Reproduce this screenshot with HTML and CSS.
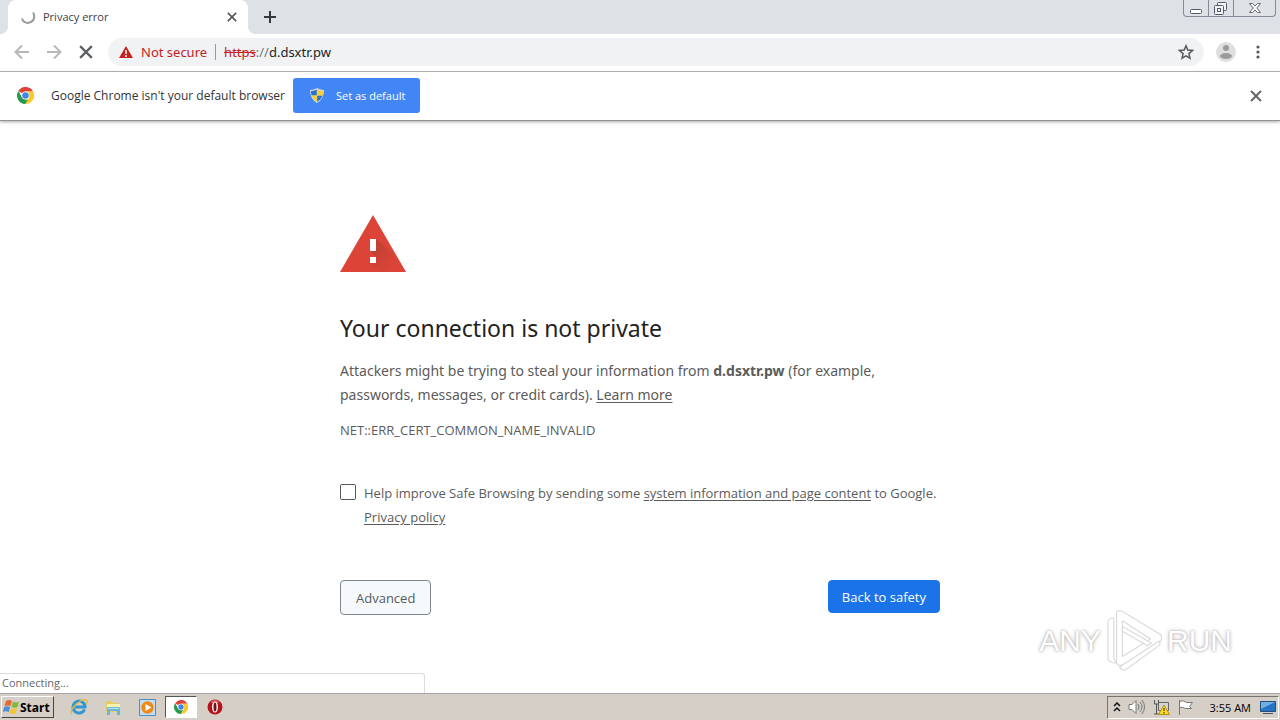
FILE: index.html
```html
<!DOCTYPE html>
<html lang="en">
<head>
<meta charset="utf-8">
<title>Privacy error</title>
<link rel="stylesheet" href="styles.css">
</head>
<body>
<svg class="defs" aria-hidden="true">
  <symbol id="chrome" viewBox="0 0 24 24">
    <path fill="#dd4237" d="M12 12 2 5.500A12 12 0 0 1 22.800 6.500H12z"/>
    <path fill="#fbc921" d="M12 6.500h10.800A12 12 0 0 1 11.500 24l5.500-9z"/>
    <path fill="#26994f" d="M2 5.500 7.200 14.800 12 17.500h3.600L11.500 24A12 12 0 0 1 2 5.500z"/>
    <circle cx="12" cy="12" r="5.600" fill="#fff"/>
    <circle cx="12" cy="12" r="4.600" fill="#4486e8"/>
  </symbol>
  <symbol id="cross" viewBox="0 0 12 12">
    <path d="m1 1 10 10M11 1 1 11" fill="none" stroke="currentColor" stroke-width="2"/>
  </symbol>
</svg>

<header class="browser">
  <div class="tabstrip">
    <div class="tab">
      <svg class="spinner" viewBox="0 0 16 16"><path d="M13 3.500Q15.500 7 13 11.500Q9 15.500 4.500 13Q2.500 12 2 9.500" fill="none" stroke="#999" stroke-width="2"/></svg>
      <span class="tab-title">Privacy error</span>
      <button class="icon-btn tab-close" aria-label="Close tab"><svg width="10" height="10"><use href="#cross"/></svg></button>
    </div>
    <button class="icon-btn new-tab" aria-label="New tab"><svg width="12" height="12" viewBox="0 0 12 12"><path d="M6 0v12M0 6h12" stroke="#35383d" stroke-width="2"/></svg></button>
    <div class="window-controls">
      <button class="win-btn" aria-label="Minimize"><svg width="14" height="14" viewBox="0 0 14 14"><rect x="1.500" y="8.500" width="11" height="4" rx="1" fill="#fff" stroke="#555b66"/></svg></button>
      <button class="win-btn" aria-label="Restore"><svg width="14" height="14" viewBox="0 0 14 14" fill="#f2f3f5" stroke="#555b66"><rect x="3.500" y="1.500" width="9" height="8" rx="1"/><rect x=".5" y="4.500" width="9" height="9" rx="1"/><rect x="3.500" y="7.500" width="3" height="3"/></svg></button>
      <button class="win-btn win-close" aria-label="Close"><svg width="12" height="12" viewBox="0 0 12 12"><path d="M.5 1.500h3L6 4l2.500-2.500h3L7.800 6l3.700 4.500h-3L6 8l-2.500 2.500h-3L4.200 6z" fill="#fff" stroke="#666b75"/></svg></button>
    </div>
  </div>

  <div class="toolbar">
    <button class="icon-btn nav" aria-label="Back"><svg width="16" height="16" viewBox="0 0 16 16"><path d="M15 8H2M8 1.500 1.500 8 8 14.500" fill="none" stroke="#b8b8b8" stroke-width="2"/></svg></button>
    <button class="icon-btn nav" aria-label="Forward"><svg width="16" height="16" viewBox="0 0 16 16"><path d="M1 8h13M8 1.500 14.500 8 8 14.500" fill="none" stroke="#b8b8b8" stroke-width="2"/></svg></button>
    <button class="icon-btn nav stop" aria-label="Stop"><svg width="14" height="14"><use href="#cross"/></svg></button>
    <div class="omnibox">
      <svg width="14" height="12" viewBox="0 0 14 12"><path d="m7 0 7 12H0z" fill="#c5221f"/><path d="M7 4v4M7 9v2" stroke="#fff" stroke-width="1.500"/></svg>
      <span class="not-secure">Not secure</span>
      <span class="url"><s>https</s><i>://</i>d.dsxtr.pw</span>
      <button class="icon-btn star" aria-label="Bookmark"><svg width="16" height="16" viewBox="0 0 16 16"><path d="m8 1.800 1.800 4.300 4.700.4-3.600 3.100 1.100 4.600L8 11.800l-4 2.400 1.100-4.600-3.600-3.100 4.700-.4z" fill="none" stroke="#555a60" stroke-width="1.500"/></svg></button>
    </div>
    <button class="icon-btn profile" aria-label="Profile"><svg width="20" height="20" viewBox="0 0 20 20"><circle cx="10" cy="10" r="10" fill="#dfdfdf"/><circle cx="10" cy="6" r="3" fill="#9b9b9b"/><ellipse cx="10" cy="14" rx="6" ry="3" fill="#9b9b9b"/></svg></button>
    <button class="icon-btn menu" aria-label="Menu"><svg width="4" height="14" viewBox="0 0 4 14" fill="#55585d"><circle cx="2" cy="2" r="1.600"/><circle cx="2" cy="7" r="1.600"/><circle cx="2" cy="12" r="1.600"/></svg></button>
  </div>

  <div class="infobar">
    <svg width="17" height="17"><use href="#chrome"/></svg>
    <span class="info-text">Google Chrome isn't your default browser</span>
    <button class="set-default">
      <svg width="14" height="15" viewBox="0 0 14 15"><path d="M7 0q3 2 7 2 0 9-7 13Q0 11 0 2q4 0 7-2z" fill="#d9dde2"/><path d="M6.800 1.500v6H1.500Q1 5 1 3q3 0 5.800-1.500zM7.200 7.500h5.500Q11 12 7.200 14z" fill="#2773c7"/><path d="M7.200 1.500Q10 3 13 3q0 2-.3 4.500H7.200zM6.800 7.500V14Q3 12 1.500 7.500z" fill="#f8cd32"/></svg>
      Set as default
    </button>
    <button class="icon-btn info-close" aria-label="Dismiss"><svg width="12" height="12"><use href="#cross"/></svg></button>
  </div>
</header>

<main class="page">
  <div class="interstitial">
    <svg class="warning" width="66" height="57" viewBox="0 0 66 57"><defs><linearGradient id="shade" x1="0" y1="0" x2="1" y2="1"><stop offset="0" stop-color="#8f4034" stop-opacity=".6"/><stop offset=".8" stop-color="#b83e31" stop-opacity="0"/></linearGradient></defs><path d="m33 0 33 57H0z" fill="#db4437"/><path d="m36 24 17 15 11 18H39l-9-9 6-6-6-6z" fill="url(#shade)"/><path d="M30 24h6v12h-6zM30 42h6v6h-6z" fill="#fff"/></svg>
    <h1>Your connection is not private</h1>
    <p class="message">Attackers might be trying to steal your information from <strong>d.dsxtr.pw</strong> (for example, passwords, messages, or credit cards). <a href="#">Learn more</a></p>
    <p class="error-code">NET::ERR_CERT_COMMON_NAME_INVALID</p>
    <div class="opt-in">
      <input type="checkbox" id="report">
      <label for="report">Help improve Safe Browsing by sending some <a href="#">system information and page content</a> to Google. <a href="#">Privacy policy</a></label>
    </div>
    <div class="actions">
      <button class="action advanced">Advanced</button>
      <button class="action safety">Back to safety</button>
    </div>
  </div>
  <div class="status">Connecting...</div>
  <div class="watermark">
    <span>ANY</span>
    <svg width="58" height="64" viewBox="0 0 60 64" fill="#fff" stroke="#dadada" stroke-width="1.200" stroke-linejoin="round"><path d="M3 12q0-3 6-4v42l3 5q-9-1-9-5z"/><path fill-rule="evenodd" d="M12 2q3-3 7 0l38 23q3 3 0 8L18 57q-6 1-6-3zM18 11v37l29-18z"/><path d="m18 17 30 17-4 3-26-15zM57 36 21 62q-4 0-6-3l41-27z"/></svg>
    <span>RUN</span>
  </div>
</main>

<footer class="taskbar">
  <button class="start">
    <svg width="17" height="16" viewBox="0 0 17 16"><path d="M3 2q3-2 6 0L7.500 7q-3-1-6 0z" fill="#e66a32"/><path d="M10 2.500q3 2 6 0L14.500 8q-3 1.500-6 0z" fill="#82b93c"/><path d="M1.200 8q3-1.500 6 0l-1.500 5q-3-1.500-6 0z" fill="#4a91d5"/><path d="M8.200 9q3 1.500 6 0l-1.500 5q-3 2-6 0z" fill="#f6c52d"/></svg>
    Start
  </button>
  <nav class="pinned" aria-label="Pinned programs">
    <button class="task" aria-label="Internet Explorer"><svg width="18" height="18" viewBox="0 0 18 18"><path d="M14.500 11.500A6 6 0 1 1 15 9H5" fill="none" stroke="#3296d2" stroke-width="3"/><path d="M2 16Q-1 13 6 6.500T16.500 2q1.500 1 0 4" fill="none" stroke="#e6b93c" stroke-width="1.300"/></svg></button>
    <button class="task" aria-label="Explorer"><svg width="17" height="17" viewBox="0 0 17 17"><path d="M1 2h6l1 2h7v9H1z" fill="#e8ca67"/><path d="M2 5h13v4H2z" fill="#fff2ac"/><path d="M2 16V9q0-1 1-1h11q1 0 1 1v7h-3v-4H5v4z" fill="#67b7dc"/><path d="M3 9h11v1H3z" fill="#b8e2ef"/></svg></button>
    <button class="task" aria-label="Media Player"><svg width="17" height="17" viewBox="0 0 17 17"><path d="M.5.500h16v16H.5z" fill="#c1def5" stroke="#4c8fc5"/><circle cx="8.500" cy="8.500" r="6.200" fill="#f08a19"/><path d="m6.500 5 6 3.500-6 3.500z" fill="#fff"/></svg></button>
    <button class="task active" aria-label="Google Chrome"><svg width="14" height="14"><use href="#chrome"/></svg></button>
    <button class="task" aria-label="Opera"><svg width="16" height="16" viewBox="0 0 16 16"><circle cx="8" cy="8" r="7.500" fill="#b3131b"/><path d="M3 3q5-4 10 0L8 5z" fill="#d85a5d"/><ellipse cx="8" cy="8" rx="3" ry="5.500" fill="#fff"/><ellipse cx="8" cy="8" rx="1.500" ry="4.500" fill="#771015"/></svg></button>
  </nav>
  <div class="tray">
    <svg width="8" height="10" viewBox="0 0 8 10"><path d="m1 4 3-3 3 3M1 9l3-3 3 3" fill="none" stroke="#111" stroke-width="1.500"/></svg>
    <svg width="18" height="16" viewBox="0 0 18 16" stroke="#777"><path d="M1 5.500h3l4-4v13l-4-4H1z" fill="#fff"/><path d="M10 5q2 3 0 6M12 3q4 5 0 10M14 1q5 7 0 14" fill="none"/></svg>
    <svg width="17" height="16" viewBox="0 0 17 16"><path d="M5.500 3.500h10v8h-10z" fill="#d3d3d3" stroke="#666"/><path d="M1.500 1v4h4V1M3.500 5v10M1 15h8" fill="none" stroke="#555"/><path d="m11 6 5.500 9.500h-11z" fill="#ffdb25" stroke="#b89112"/><path d="M11 9v3M11 13v1.500" stroke="#222"/></svg>
    <svg width="17" height="16" viewBox="0 0 17 16"><path d="M2.500 2.500q4-2 7 1h6l-3 4 2 2h-6q-3-2-6-1z" fill="#fff" stroke="#777"/><path d="M2.500 1v15" stroke="#777"/></svg>
    <time class="clock">3:55 AM</time>
    <svg width="16" height="15" viewBox="0 0 16 15"><path d="M.5 1.500h15v10H.5z" fill="#2675c5" stroke="#234d7c"/><path d="M1 2h14L1 9z" fill="#74afe4"/><path d="M3 13h10v1H3z" fill="#456"/></svg>
  </div>
</footer>
</body>
</html>
```

FILE: styles.css
```css
* { box-sizing: border-box; }
body {
  margin: 0;
  min-height: 100vh;
  display: flex;
  flex-direction: column;
  background: #fff;
  color: #5b5b5b;
  font-family: "Open Sans", "Noto Sans", sans-serif;
  font-size: 12px;
}
button { font: inherit; color: inherit; margin: 0; }
svg { display: block; flex: none; }
a { color: inherit; text-decoration: underline; text-underline-offset: 2px; }
.defs { position: absolute; width: 0; height: 0; }
.icon-btn { display: grid; place-items: center; padding: 0; border: 0; background: none; flex: none; }

.tabstrip { display: flex; height: 34px; padding-left: 8px; background: #dee1e6; }
.tab {
  position: relative;
  display: flex;
  align-items: center;
  width: 240px;
  padding: 0 10px 1px 12px;
  border-radius: 8px 8px 0 0;
  background: #fff;
  color: #3d4043;
  font-size: 11px;
}
.tab::before, .tab::after {
  content: "";
  position: absolute;
  bottom: 0;
  width: 8px;
  height: 8px;
}
.tab::before { left: -8px; background: radial-gradient(circle at 0 0, #dee1e6 8px, #fff 8px); }
.tab::after { right: -8px; background: radial-gradient(circle at 100% 0, #dee1e6 8px, #fff 8px); }
.spinner { width: 16px; height: 16px; margin-right: 7px; }
.tab-title { flex: 1; }
.tab-close { width: 12px; height: 16px; color: #55585c; }
.new-tab { width: 28px; margin-left: 8px; }
.window-controls {
  display: flex;
  height: 17px;
  margin: 0 4px 0 auto;
  border: 1px solid #858b96;
  border-top: 0;
  border-radius: 0 0 4px 4px;
}
.win-btn { display: grid; place-items: center; width: 25px; padding: 0; border: 0; border-right: 1px solid #858b96; background: none; }
.win-close { width: 41px; border-right: 0; }

.toolbar { display: flex; align-items: center; height: 38px; padding: 0 8px 1px 6px; border-bottom: 1px solid #b0b0b0; }
.nav { width: 32px; height: 32px; }
.stop { color: #5d6064; }
.omnibox {
  flex: 1;
  display: flex;
  align-items: center;
  height: 28px;
  margin-left: 6px;
  padding: 0 10px 0 11px;
  border-radius: 14px;
  background: #f0f2f4;
  font: 13px "Noto Sans", sans-serif;
}
.not-secure { margin-left: 8px; padding-right: 8px; color: #c5221f; line-height: 16px; border-right: 1px solid #999; }
.url { margin-left: 8px; color: #222427; }
.url s { color: #c5221f; }
.url i { color: #777; font-style: normal; }
.star { margin-left: auto; }
.profile { width: 20px; margin-left: 12px; }
.menu { width: 28px; margin-left: 8px; }

.infobar {
  display: flex;
  align-items: center;
  height: 49px;
  padding: 0 18px 1px 17px;
  border-bottom: 1px solid #929292;
  box-shadow: 0 1px 3px #aaa;
}
.info-text { margin-left: 17px; color: #333; }
.set-default {
  display: flex;
  align-items: center;
  gap: 12px;
  height: 35px;
  margin-left: 8px;
  padding: 0 15px 0 17px;
  border: 0;
  border-radius: 3px;
  background: #4285f4;
  color: #fff;
  font-size: 11px;
}
.info-close { margin-left: auto; color: #64676b; }

.page { position: relative; flex: 1; display: flex; flex-direction: column; }
.interstitial { width: 100%; max-width: 600px; margin: 0 auto; padding-top: 94px; }
h1 { margin: 40px 0 0; color: #222; font: 400 23px/32px "Noto Sans", sans-serif; }
.message { margin: 15px 0 0; font: 14px/24px "Noto Sans", sans-serif; }
.error-code { margin: 13px 0 0; font-size: 13px; line-height: 20px; }
.opt-in { display: flex; gap: 8px; margin-top: 41px; font-size: 13px; line-height: 24px; }
.opt-in input {
  appearance: none;
  flex: none;
  width: 16px;
  height: 16px;
  margin: 3px 0 0;
  border: 1px solid #5b5b5b;
  border-radius: 2px;
}
.actions { display: flex; justify-content: space-between; margin-top: 51px; font-size: 13px; }
.action { height: 35px; padding: 0 15px; border: 1px solid #7e858c; border-radius: 4px; }
.advanced { background: #f6f9fb; color: #565a5f; }
.safety { height: 33px; padding: 0 13px; border-color: #1a73e8; background: #1a73e8; color: #fff; }

.status {
  width: 425px;
  height: 20px;
  margin-top: auto;
  padding-left: 2px;
  border: 1px solid #ddd;
  border-width: 1px 1px 0 0;
  border-radius: 0 3px 0 0;
  color: #666;
  font-size: 11px;
  line-height: 18px;
}
.watermark {
  position: absolute;
  right: 48px;
  bottom: 20px;
  display: flex;
  align-items: center;
  gap: 4px;
  color: #fff;
  font: 30px "Liberation Sans Narrow", "Liberation Sans", sans-serif;
  text-shadow: 0 0 2px #aaa, 0 0 4px #bbb;
}

.taskbar {
  display: flex;
  align-items: center;
  height: 27px;
  padding: 0 1px;
  border-top: 1px solid #aaa69f;
  background: #d5cfc8;
  color: #000;
}
.start {
  display: flex;
  align-items: center;
  gap: 0;
  width: 53px;
  height: 22px;
  padding: 0 1px;
  border: 1px solid;
  border-color: #fff #444 #444 #fff;
  background: #d5cfc8;
  font-size: 12px;
  font-weight: 700;
}
.pinned { display: flex; margin-left: 9px; }
.task { display: grid; place-items: center; width: 32px; height: 22px; margin-right: 2px; padding: 0; border: 1px solid transparent; background: none; }
.task.active { border-color: #555 #fff #fff #555; background: #fff; }
.tray {
  display: flex;
  align-items: center;
  gap: 7px;
  height: 23px;
  margin-left: auto;
  padding: 0 2px 0 5px;
  border: 1px solid;
  border-color: #77736d #fff #fff #77736d;
}
.clock { margin: 0 2px 0 9px; font-size: 11px; }
```
